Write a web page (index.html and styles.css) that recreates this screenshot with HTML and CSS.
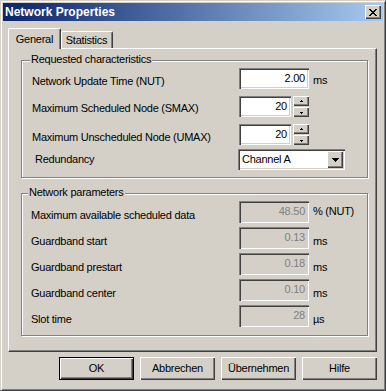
FILE: index.html
```html
<!DOCTYPE html>
<html>
<head>
<meta charset="utf-8">
<title>Network Properties</title>
<link rel="stylesheet" href="styles.css">
</head>
<body>
<div class="window">
  <div class="titlebar">
    <span class="title">Network Properties</span>
    <span class="close-btn">
      <svg width="8" height="7" viewBox="0 0 8 7" shape-rendering="crispEdges">
        <path d="M0 0h2v1h-2zM6 0h2v1h-2zM1 1h2v1h-2zM5 1h2v1h-2zM2 2h4v1h-4zM3 3h2v1h-2zM2 4h4v1h-4zM1 5h2v1h-2zM5 5h2v1h-2zM0 6h2v1h-2zM6 6h2v1h-2z" fill="#000"/>
      </svg>
    </span>
  </div>
  <div class="content">
    <div class="tabs">
      <div class="tab tab-active">General</div>
      <div class="tab tab-stats">Statistics</div>
    </div>
    <div class="panel">
      <div class="group group-req">
        <span class="legend">Requested characteristics</span>
        <div class="row row-28">
          <span class="label lbl-7">Network Update Time (NUT)</span>
          <span class="field field-wide">2.00</span>
          <span class="unit unit-top">ms</span>
        </div>
        <div class="row row-28">
          <span class="label lbl-6">Maximum Scheduled Node (SMAX)</span>
          <span class="field field-narrow">20</span>
          <span class="spin">
            <span class="spin-btn"><svg width="5" height="3" viewBox="0 0 5 3" shape-rendering="crispEdges"><path d="M2 0h1v1h-1zM1 1h3v1h-3z" fill="#000"/></svg></span>
            <span class="spin-btn"><svg width="5" height="3" viewBox="0 0 5 3" shape-rendering="crispEdges"><path d="M1 1h3v1h-3zM2 2h1v1h-1z" fill="#000"/></svg></span>
          </span>
        </div>
        <div class="row row-25">
          <span class="label lbl-7">Maximum Unscheduled Node (UMAX)</span>
          <span class="field field-narrow">20</span>
          <span class="spin">
            <span class="spin-btn"><svg width="5" height="3" viewBox="0 0 5 3" shape-rendering="crispEdges"><path d="M2 0h1v1h-1zM1 1h3v1h-3z" fill="#000"/></svg></span>
            <span class="spin-btn"><svg width="5" height="3" viewBox="0 0 5 3" shape-rendering="crispEdges"><path d="M1 1h3v1h-3zM2 2h1v1h-1z" fill="#000"/></svg></span>
          </span>
        </div>
        <div class="row row-last">
          <span class="label lbl-4 label-indent">Redundancy</span>
          <span class="combo">
            <span class="combo-text">Channel A</span>
            <span class="combo-btn"><svg width="7" height="4" viewBox="0 0 7 4" shape-rendering="crispEdges"><path d="M0 0h7v1h-7zM1 1h5v1h-5zM2 2h3v1h-3zM3 3h1v1h-1z" fill="#000"/></svg></span>
          </span>
        </div>
      </div>

      <div class="group group-net">
        <span class="legend legend-net">Network parameters</span>
        <div class="row row-26">
          <span class="label label-net">Maximum available scheduled data</span>
          <span class="field field-wide field-disabled">48.50</span>
          <span class="unit unit-pct">% (NUT)</span>
        </div>
        <div class="row row-26">
          <span class="label label-net">Guardband start</span>
          <span class="field field-wide field-disabled">0.13</span>
          <span class="unit unit-ms">ms</span>
        </div>
        <div class="row row-26">
          <span class="label label-net">Guardband prestart</span>
          <span class="field field-wide field-disabled">0.18</span>
          <span class="unit unit-ms">ms</span>
        </div>
        <div class="row row-26">
          <span class="label label-net">Guardband center</span>
          <span class="field field-wide field-disabled">0.10</span>
          <span class="unit unit-ms">ms</span>
        </div>
        <div class="row row-last">
          <span class="label label-net">Slot time</span>
          <span class="field field-wide field-disabled">28</span>
          <span class="unit unit-ms">µs</span>
        </div>
      </div>
    </div>

    <div class="buttons">
      <span class="btn btn-default">OK</span>
      <span class="btn">Abbrechen</span>
      <span class="btn">Übernehmen</span>
      <span class="btn">Hilfe</span>
    </div>
  </div>
</div>
</body>
</html>
```

FILE: styles.css
```css
* {
  box-sizing: border-box;
}

html, body {
  margin: 0;
  padding: 0;
  background: #d4d0c8;
}

body {
  font-family: "Liberation Sans", Arial, sans-serif;
  font-size: 11px;
  line-height: 13px;
  letter-spacing: -0.25px;
  color: #000;
}

.window {
  width: 386px;
  height: 391px;
  background: #d4d0c8;
  border: 1px solid;
  border-color: #d4d0c8 #404040 #404040 #d4d0c8;
  box-shadow: inset 1px 1px #fff, inset -1px -1px #808080;
  padding: 2px;
  display: flex;
  flex-direction: column;
}

.titlebar {
  height: 18px;
  flex: none;
  background: linear-gradient(to right, #0a246a, #a6caf0);
  display: flex;
  align-items: center;
  justify-content: space-between;
  padding: 0 2px 0 2px;
}

.title {
  color: #fff;
  font-weight: bold;
  font-size: 12px;
  line-height: 14px;
  letter-spacing: 0;
}

.close-btn {
  width: 16px;
  height: 14px;
  background: #d4d0c8;
  box-shadow: inset 1px 1px #fff, inset -1px -1px #404040, inset -2px -2px #808080;
  display: flex;
  align-items: center;
  justify-content: center;
}

.close-btn svg {
  display: block;
}

.content {
  flex: 1;
  display: flex;
  flex-direction: column;
  padding: 7px 6px 0 5px;
}

/* Tabs */
.tabs {
  display: flex;
  align-items: flex-end;
  height: 20px;
  position: relative;
  z-index: 1;
}

.tab {
  height: 17px;
  width: 52px;
  background: #d4d0c8;
  border-top: 1px solid #fff;
  border-left: 1px solid #fff;
  border-right: 1px solid #404040;
  border-radius: 2px 2px 0 0;
  box-shadow: inset -1px 0 #808080;
  text-align: center;
  padding-top: 2px;
}

.tab-active {
  width: 53px;
  height: 21px;
  margin-bottom: -1px;
  padding-top: 4px;
}

.tab-stats {
  padding-right: 1px;
}

/* Panel */
.panel {
  height: 304px;
  flex: none;
  border: 1px solid;
  border-color: #fff #404040 #404040 #fff;
  box-shadow: inset -1px -1px #808080;
  padding-top: 11px;
  display: flex;
  flex-direction: column;
}

.group {
  position: relative;
  margin: 0 8px 0 12px;
  border: 1px solid #808080;
  box-shadow: 1px 1px 0 #fff, inset 1px 1px 0 #fff;
  padding: 7px 0 7px 10px;
}

.group-net {
  margin-top: 15px;
  padding-left: 9px;
  padding-bottom: 8px;
}

.legend {
  position: absolute;
  top: -8px;
  left: 8px;
  background: #d4d0c8;
  padding: 0 1px;
  white-space: nowrap;
}

.legend-net {
  left: 6px;
}

.row {
  display: flex;
  align-items: flex-start;
}

.row-28 { height: 28px; }
.row-25 { height: 25px; }
.row-26 { height: 26px; }

.label {
  width: 207px;
  flex: none;
  white-space: nowrap;
}

.label-net {
  width: 208px;
  margin-top: 8px;
}

.lbl-7 { margin-top: 7px; }
.lbl-6 { margin-top: 6px; }
.lbl-4 { margin-top: 4px; }

.label-indent {
  padding-left: 3px;
}

.field {
  height: 21px;
  background: #fff;
  box-shadow: inset 1px 1px #808080, inset 2px 2px #404040, inset -1px -1px #fff, inset -2px -2px #d4d0c8;
  text-align: right;
  padding: 4px 4px 0 0;
  flex: none;
}

.group-net .field {
  height: 22px;
}

.field-wide { width: 70px; }
.field-narrow { width: 52px; }

.field-disabled {
  background: #d4d0c8;
  color: #808080;
}

.unit {
  margin-left: 4px;
  white-space: nowrap;
}

.unit-top { margin-top: 6px; }
.unit-pct { margin-top: 4px; }
.unit-ms { margin-top: 8px; }

.spin {
  display: flex;
  flex-direction: column;
  gap: 1px;
  margin-left: 2px;
}

.spin-btn {
  width: 16px;
  height: 10px;
  background: #d4d0c8;
  box-shadow: inset 1px 1px #fff, inset -1px -1px #404040, inset -2px -2px #808080;
  display: flex;
  align-items: center;
  justify-content: center;
}

.spin-btn svg { display: block; }

.combo {
  width: 107px;
  height: 21px;
  margin-left: -1px;
  background: #fff;
  box-shadow: inset 1px 1px #808080, inset 2px 2px #404040, inset -1px -1px #fff, inset -2px -2px #d4d0c8;
  display: flex;
  align-items: center;
  justify-content: space-between;
  padding: 2px;
}

.combo-text {
  padding-left: 2px;
}

.combo-btn {
  width: 16px;
  height: 17px;
  background: #d4d0c8;
  box-shadow: inset 1px 1px #fff, inset -1px -1px #404040, inset -2px -2px #808080;
  display: flex;
  align-items: center;
  justify-content: center;
}

.combo-btn svg { display: block; }

/* Buttons */
.buttons {
  display: flex;
  justify-content: flex-end;
  gap: 6px;
  margin-top: 5px;
}

.btn {
  width: 75px;
  height: 23px;
  background: #d4d0c8;
  box-shadow: inset 1px 1px #fff, inset -1px -1px #404040, inset -2px -2px #808080;
  display: flex;
  align-items: center;
  justify-content: center;
}

.btn-default {
  border: 1px solid #000;
}
```
